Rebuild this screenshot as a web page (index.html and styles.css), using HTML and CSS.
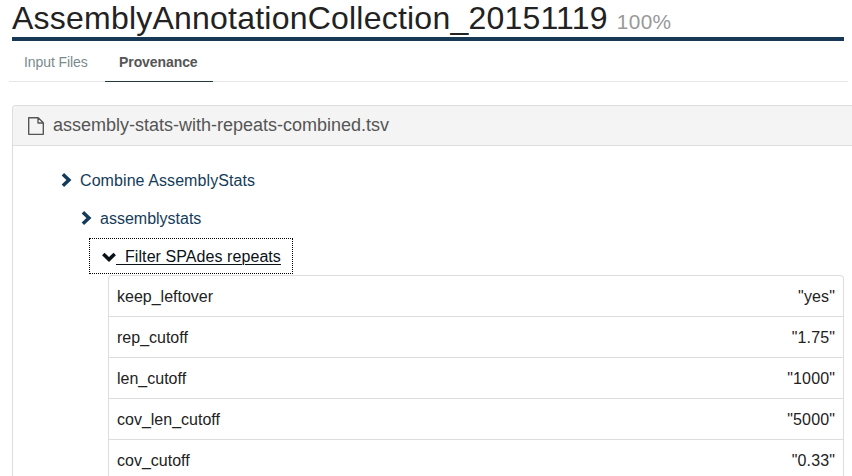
FILE: index.html
```html
<!DOCTYPE html>
<html lang="en">
<head>
<meta charset="utf-8">
<title>AssemblyAnnotationCollection_20151119</title>
<link rel="stylesheet" href="styles.css">
</head>
<body>
<header class="title"><h1>AssemblyAnnotationCollection_20151119</h1><small>100%</small></header>
<nav class="tabs">
  <a class="tab">Input Files</a>
  <a class="tab active">Provenance</a>
</nav>
<section class="panel">
  <div class="panel-head">
    <svg class="file" viewBox="0 0 16 18"><path d="M.7 .7H10.2L15.3 5.8V17.3H.7ZM10 .7V6H15.3" fill="none" stroke="currentColor" stroke-width="1.35" stroke-linejoin="round"/></svg>
    <span class="filename">assembly-stats-with-repeats-combined.tsv</span>
  </div>
  <div class="tree">
    <a class="node first"><svg class="chev" viewBox="0 0 10 14"><path d="M1.9 1.3L7.9 7L1.9 12.7" fill="none" stroke="currentColor" stroke-width="3.5"/></svg><span class="combine">Combine AssemblyStats</span></a>
    <a class="node second"><svg class="chev" viewBox="0 0 10 14"><path d="M1.9 1.3L7.9 7L1.9 12.7" fill="none" stroke="currentColor" stroke-width="3.5"/></svg><span>assemblystats</span></a>
    <a class="node open"><svg class="down" viewBox="0 0 14 10"><path d="M1.3 1.9L7 7.5L12.7 1.9" fill="none" stroke="currentColor" stroke-width="3.5"/></svg><span class="label">&nbsp; Filter SPAdes repeats</span></a>
    <ul class="params">
      <li><span>keep_leftover</span><span class="value">"yes"</span></li>
      <li><span>rep_cutoff</span><span class="value">"1.75"</span></li>
      <li><span>len_cutoff</span><span class="value">"1000"</span></li>
      <li><span>cov_len_cutoff</span><span class="value">"5000"</span></li>
      <li><span>cov_cutoff</span><span class="value">"0.33"</span></li>
    </ul>
  </div>
</section>
</body>
</html>
```
FILE: styles.css
```css
* { box-sizing: border-box; }
body {
  display: flex;
  flex-direction: column;
  margin: 0;
  height: 476px;
  overflow: hidden;
  background: #fff;
  color: #222;
  font: 16px/24px "Liberation Sans", Arial, sans-serif;
}
.title {
  display: flex;
  flex: none;
  align-items: baseline;
  height: 41px;
  margin: 0 8px 0 12px;
  border-bottom: 4px solid #173955;
  white-space: nowrap;
}
h1 { margin: 0; font-size: 32px; line-height: 37px; font-weight: 400; letter-spacing: .22px; }
.title small { margin-left: 9px; font-size: 20.8px; letter-spacing: .35px; color: #999; }
.tabs {
  display: flex;
  flex: none;
  height: 41px;
  margin: 0 4px 0 9px;
  border-bottom: 1px solid #e7e7e7;
}
.tab {
  width: 96px;
  height: 41px;
  padding: 9px 0 0 15px;
  font-size: 14px;
  letter-spacing: -.08px;
  color: #7b8a8d;
  white-space: nowrap;
}
.tab.active {
  width: 108px;
  padding: 9px 0 0 14px;
  border-bottom: 1px solid #27393f;
  color: #555;
  font-weight: 700;
}
.panel {
  flex: 1;
  min-height: 0;
  overflow: hidden;
  margin: 23px 0 0 12px;
  border: solid #ddd;
  border-width: 1px 0 0 1px;
  border-radius: 4px 0 0 0;
}
.panel-head {
  display: flex;
  align-items: center;
  height: 40px;
  padding-left: 15px;
  border-bottom: 1px solid #ddd;
  border-radius: 3px 0 0 0;
  background: #f4f4f4;
  color: #555;
}
.file { width: 16px; height: 18px; }
.filename { margin: -2px 0 0 9px; font-size: 18px; white-space: nowrap; }
.tree { padding: 16px 8px 0 0; }
.node {
  display: flex;
  align-items: center;
  width: max-content;
  height: 38px;
  color: #143c5a;
  white-space: nowrap;
}
.first { margin-left: 48px; }
.second { margin-left: 68px; }
.chev { width: 10px; height: 14px; margin: -2px 9px 0 0; overflow: visible; }
.combine { letter-spacing: .08px; }
.open {
  height: 36px;
  margin: 0 0 1px 76px;
  width: 204px;
  padding-left: 12px;
  border: 1px dotted #000;
  color: #0a1117;
}
.down { width: 14px; height: 10px; margin-top: 2px; overflow: visible; }
.label {
  margin-top: 2px;
  letter-spacing: .07px;
  text-decoration: underline;
  text-underline-offset: 2px;
  text-decoration-thickness: 1px;
}
.params {
  margin: 0 0 0 95px;
  padding: 0;
  list-style: none;
  border: 1px solid #ddd;
  border-bottom: 0;
  border-radius: 4px 4px 0 0;
}
.params li {
  display: flex;
  justify-content: space-between;
  height: 41px;
  padding: 9px 8px 0;
  border-bottom: 1px solid #ddd;
}
.params li:last-child { height: 36px; border-bottom: 0; }
.value { letter-spacing: .13px; }
```
